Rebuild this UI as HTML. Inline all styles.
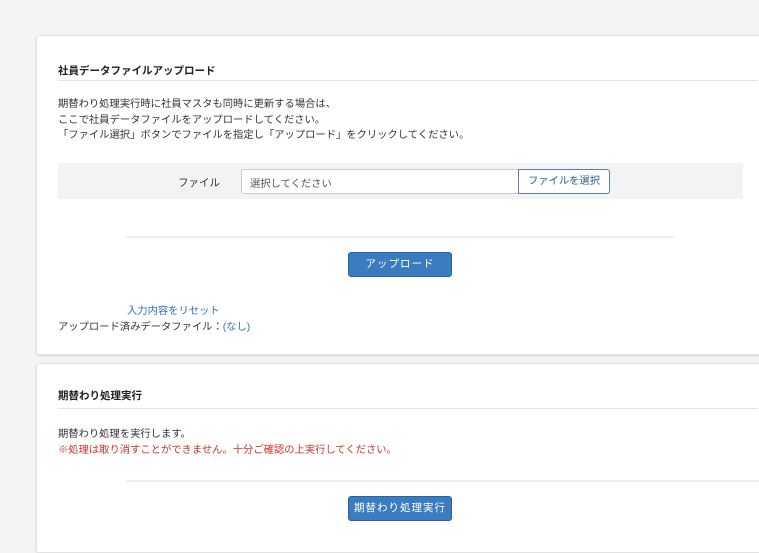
<!DOCTYPE html>
<html><head><meta charset="utf-8"><style>
*{margin:0;padding:0;box-sizing:border-box}
body{width:759px;height:536px;overflow:hidden;background:#f4f4f4;font-family:"Liberation Sans","Noto Sans CJK JP",sans-serif;font-size:10.3px;color:#333;position:relative}
.card{position:absolute;left:36px;width:740px;background:#fff;border:1px solid #e2e2e2;border-radius:3px;box-shadow:0 1px 2px rgba(0,0,0,.1)}
.a{position:absolute;white-space:nowrap}
.t{font-weight:bold;font-size:10.5px;color:#222}
.hl{position:absolute;height:1px;background:#e4e4e4}
.btn{position:absolute;background:#3a7cbf;border:1px solid #2a63a0;border-radius:3px;color:#fff;font-size:10.5px;text-align:center;line-height:22px;letter-spacing:1px}
</style></head><body>
<div class="card" style="top:35px;height:320px"></div>
<div class="card" style="top:363px;height:190px"></div>

<div class="a t" style="left:58px;top:63px">社員データファイルアップロード</div>
<div class="hl" style="left:58px;top:80px;width:700px"></div>
<div class="a" style="left:58px;top:97px;line-height:15.5px">期替わり処理実行時に社員マスタも同時に更新する場合は、<br>ここで社員データファイルをアップロードしてください。<br>「ファイル選択」ボタンでファイルを指定し「アップロード」をクリックしてください。</div>
<div class="a" style="left:58px;top:163px;width:685px;height:36px;background:#f3f3f3"></div>
<div class="a" style="left:178px;top:175px;font-size:10.5px">ファイル</div>
<div class="a" style="left:241px;top:169px;width:278px;height:25px;background:#fff;border:1px solid #ccc;border-radius:3px 0 0 3px;padding:5px 8px;color:#555">選択してください</div>
<div class="a" style="left:518px;top:169px;width:92px;height:25px;background:#fff;border:1px solid #5a7ea6;border-radius:0 3px 3px 0;text-align:center;line-height:23px;color:#2b5b8f">ファイルを選択</div>
<div class="hl" style="left:126px;top:236px;width:548px;height:2px;background:#eee"></div>
<div class="btn" style="left:348px;top:252px;width:104px;height:25px">アップロード</div>
<div class="a" style="left:127px;top:302px;color:#2f6fc0">入力内容をリセット</div>
<div class="a" style="left:58px;top:318px">アップロード済みデータファイル：<span style="color:#2f6fc0">(なし)</span></div>

<div class="a t" style="left:58px;top:388px">期替わり処理実行</div>
<div class="hl" style="left:58px;top:408px;width:700px"></div>
<div class="a" style="left:58px;top:425px">期替わり処理を実行します。</div>
<div class="a" style="left:58px;top:441px;color:#d0302a">※処理は取り消すことができません。十分ご確認の上実行してください。</div>
<div class="hl" style="left:126px;top:480px;width:633px;height:2px;background:#eee"></div>
<div class="btn" style="left:348px;top:496px;width:104px;height:25px">期替わり処理実行</div>
</body></html>
